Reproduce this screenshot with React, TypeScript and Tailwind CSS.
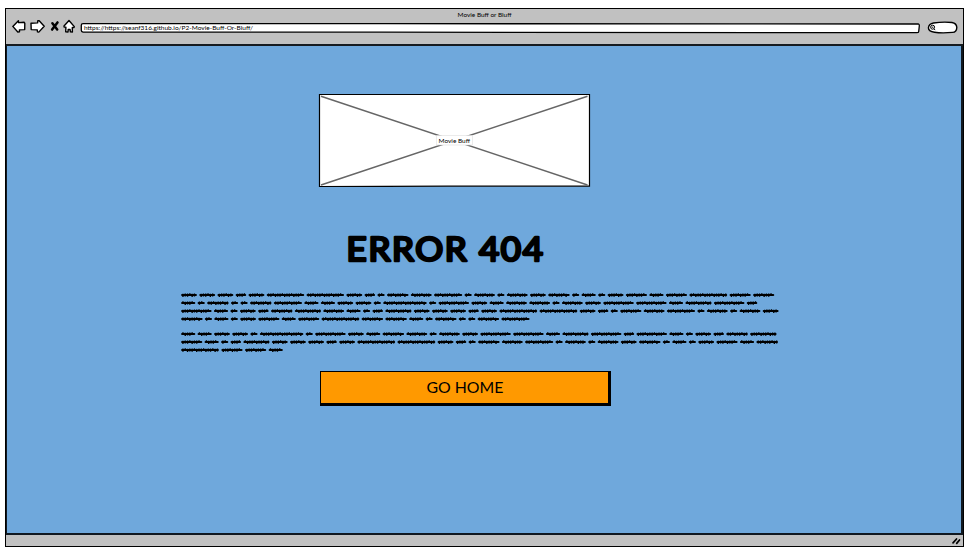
const LINES: { end: number; words: number[] }[] = [
  { end: 1780, words: [46, 46, 46, 30, 46, 111, 111, 46, 30, 20, 63, 61, 83, 20, 61, 20, 61, 46, 63, 20, 41, 20, 46, 62, 41, 62, 112, 62, 62] },
  { end: 1729, words: [41, 20, 63, 20, 20, 63, 83, 41, 41, 46, 46, 20, 129, 20, 90, 46, 41, 61, 61, 20, 61, 46, 90, 90, 41, 77, 90, 30] },
  { end: 1793, words: [90, 41, 20, 46, 30, 63, 77, 61, 41, 20, 30, 77, 46, 46, 46, 30, 46, 112, 112, 46, 30, 20, 62, 61, 83, 20, 61, 20, 61, 46] },
  { end: 1045, words: [63, 20, 41, 20, 46, 62, 41, 62, 112, 63, 63, 41, 20, 63, 20, 20, 63, 83] },
  { end: 0, words: [] },
  { end: 1787, words: [41, 41, 46, 46, 20, 129, 20, 90, 46, 41, 63, 61, 20, 61, 46, 90, 90, 41, 77, 90, 30, 90, 41, 20, 46, 30, 63, 78] },
  { end: 1791, words: [62, 41, 20, 30, 77, 46, 46, 46, 30, 46, 112, 112, 46, 30, 20, 63, 61, 83, 20, 61, 20, 61, 46, 63, 20, 41, 20, 46, 62, 41, 63] },
  { end: 304, words: [112, 62, 62, 41] },
];

// One scribbled line: a thick bar per word with small bumps above and below it.
function Scribble({ end, words }: { end: number; words: number[] }) {
  const total = words.reduce((a, b) => a + b, 0);
  const gap = words.length > 1 ? (end - total) / (words.length - 1) : 0;
  let x = 0;
  let bars = "";
  let bumps = "";
  words.forEach((w) => {
    const a = x / 3;
    const b = (x + w) / 3;
    bars += `M${(a + 0.8).toFixed(2)} 4H${(b - 0.8).toFixed(2)}`;
    let i = w % 4;
    for (let p = a + 1.6; p < b - 1; p += 2.3, i++) {
      bumps += i % 4 === 0 ? `M${p.toFixed(2)} 2.5v3.3` : i % 4 === 1 ? `M${p.toFixed(2)} 2.3v2.8` : i % 4 === 2 ? `M${p.toFixed(2)} 2.7v3.2` : `M${p.toFixed(2)} 2.4v3.2`;
    }
    x += w + gap;
  });
  return (
    <svg className="block h-[7.9px] w-[600px] overflow-visible" viewBox="0 0 600 7.9" fill="none" stroke="#000">
      <path d={bars} strokeWidth="2.2" strokeLinecap="round" />
      <path d={bumps} strokeWidth="1.4" />
    </svg>
  );
}

function NavIcons() {
  return (
    <svg className="block h-4 w-[64px] shrink-0" viewBox="0 0 64 16" fill="#fff" stroke="#000" strokeWidth="1.4" strokeLinejoin="round" strokeLinecap="round">
      <path d="M.8 7.4 6.4 1.8 6.6 3.6l5.6-.4.6 1.2-.1 6.2-5.3.3.1 1.9-1.7.2z" />
      <path d="M19 4.2l6.6-.3.2-2.2 1.4.1L32.2 7.2l-5.4 5.9-1.3-.2-.2-2-6.1-.3z" />
      <path d="M40.4 4.2l4.8 6.2M45.5 3.4 40.1 10.6" strokeWidth="2.5" />
      <path d="M57 1.5l5.3 6.1-.3 1-1.7-.1.1 4.5-2-.1-.3-2.4-1.9-.1-.2 2.6-2.3-.2.2-4.7-1.8-.1-.1-1z" />
    </svg>
  );
}

export default function App() {
  return (
    <div className="h-[556px] w-[965px] overflow-hidden bg-white pt-2 pl-[5px] font-['Lato',sans-serif] text-black">
      <div className="flex h-[539px] w-[959px] flex-col border border-t-[1.5px] border-b-[1.5px] border-black bg-[#c1c1c1]">
        <header className="flex h-[37px] shrink-0 flex-col border-b-2 border-[#161b20]">
          <div className="h-[13px] text-center">
            <svg className="mx-auto block h-[13px] w-[60px] overflow-visible" viewBox="0 0 60 13">
              <text x="2.5" y="8" fontSize="6.5" textLength="54" lengthAdjust="spacingAndGlyphs">Movie Buff or Bluff</text>
            </svg>
          </div>
          <div className="-mt-[3.5px] flex h-4 items-center pl-1.5">
            <NavIcons />
            <svg className="ml-[4px] block h-4 w-[842px] shrink-0" viewBox="0 0 842 16" fill="#fff" stroke="#000" strokeWidth="1.3">
              <path d="M3 4.6C180 5 500 4.3 650 4.9l188 .1q1.5 0 1.3 2l-.6 5.5q0 1.2-2 1.2L300 13.2 3 13.1q-1.8-.2-1.7-2V6.3Q1.3 4.6 3 4.6z" />
              <text x="4" y="10.8" fontSize="6.5" textLength="169" lengthAdjust="spacingAndGlyphs" fill="#000" stroke="none">https://https://seanf316.github.io/P2-Movie-Buff-Or-Bluff/</text>
            </svg>
            <svg className="ml-[5px] block h-4 w-8 shrink-0" viewBox="0 0 32 16" fill="#fff" stroke="#000" strokeWidth="1.4">
              <path d="M6.5 4Q16 2.6 25 3.5q4.6.8 4.8 4.9-.1 4.6-4.3 5Q15 14.4 7.5 13.3 1.4 12.4 1.4 8.8 2 4.7 6.5 4z" />
              <circle cx="5.6" cy="8.2" r="2" strokeWidth="1" />
              <path d="M4.6 8.2h1.8M6.9 9.8l1.3 1.3" strokeWidth="1" />
            </svg>
          </div>
        </header>

        <main className="flex h-[488.5px] shrink-0 flex-col border-r-2 border-b-2 border-l border-[#101820] bg-[#6fa8dc]">
          <svg className="mt-[46px] ml-[311px] block h-[95px] w-[273px] shrink-0" viewBox="0 0 273 95">
            <path d="M1.5 2.5 271.5 2.5V94.2L130 94.2 1.5 94.6z" fill="#fff" stroke="#000" strokeWidth="1.2" />
            <path d="M3 4.2 269.5 93M3 93 269.5 4.2" stroke="#666" strokeWidth="1.5" />
            <path d="M118.5 43.5h36v9.5h-36z" fill="#fff" stroke="#ddd" strokeWidth=".6" />
            <text x="120.5" y="50.8" fontSize="6.5" textLength="31.5" lengthAdjust="spacingAndGlyphs">Movie Buff</text>
          </svg>
          <svg className="mt-[42px] ml-[335px] block h-[48px] w-[220px] shrink-0" viewBox="0 0 220 48">
            <text x="4.6" y="32.4" fontSize="32" letterSpacing="1.5" fontWeight="400" textLength="198" lengthAdjust="spacingAndGlyphs" stroke="#000" strokeWidth="2.6" strokeLinejoin="round">ERROR 404</text>
          </svg>
          <div className="mt-[14px] ml-[173.5px] flex flex-col">
            {LINES.map((line, i) => (
              <Scribble key={i} end={line.end} words={line.words} />
            ))}
          </div>
          <button className="mt-[17px] ml-[313px] flex h-[35px] w-[291px] shrink-0 items-center justify-center border-t border-r-[3px] border-b-[3px] border-l border-black bg-[#ff9900]">
            <svg className="block h-6 w-[80px]" viewBox="0 0 80 24">
              <text x="1.4" y="17" fontSize="16" textLength="77" lengthAdjust="spacingAndGlyphs">GO HOME</text>
            </svg>
          </button>
        </main>

        <footer className="flex grow items-center justify-end pr-[2px]">
          <svg className="block h-[9px] w-[10px]" viewBox="0 0 10 9" stroke="#000" strokeWidth="1.7" strokeLinecap="round">
            <path d="M2 6.8 5.5 3M5.7 7.4 8.5 4" />
          </svg>
        </footer>
      </div>
    </div>
  );
}
